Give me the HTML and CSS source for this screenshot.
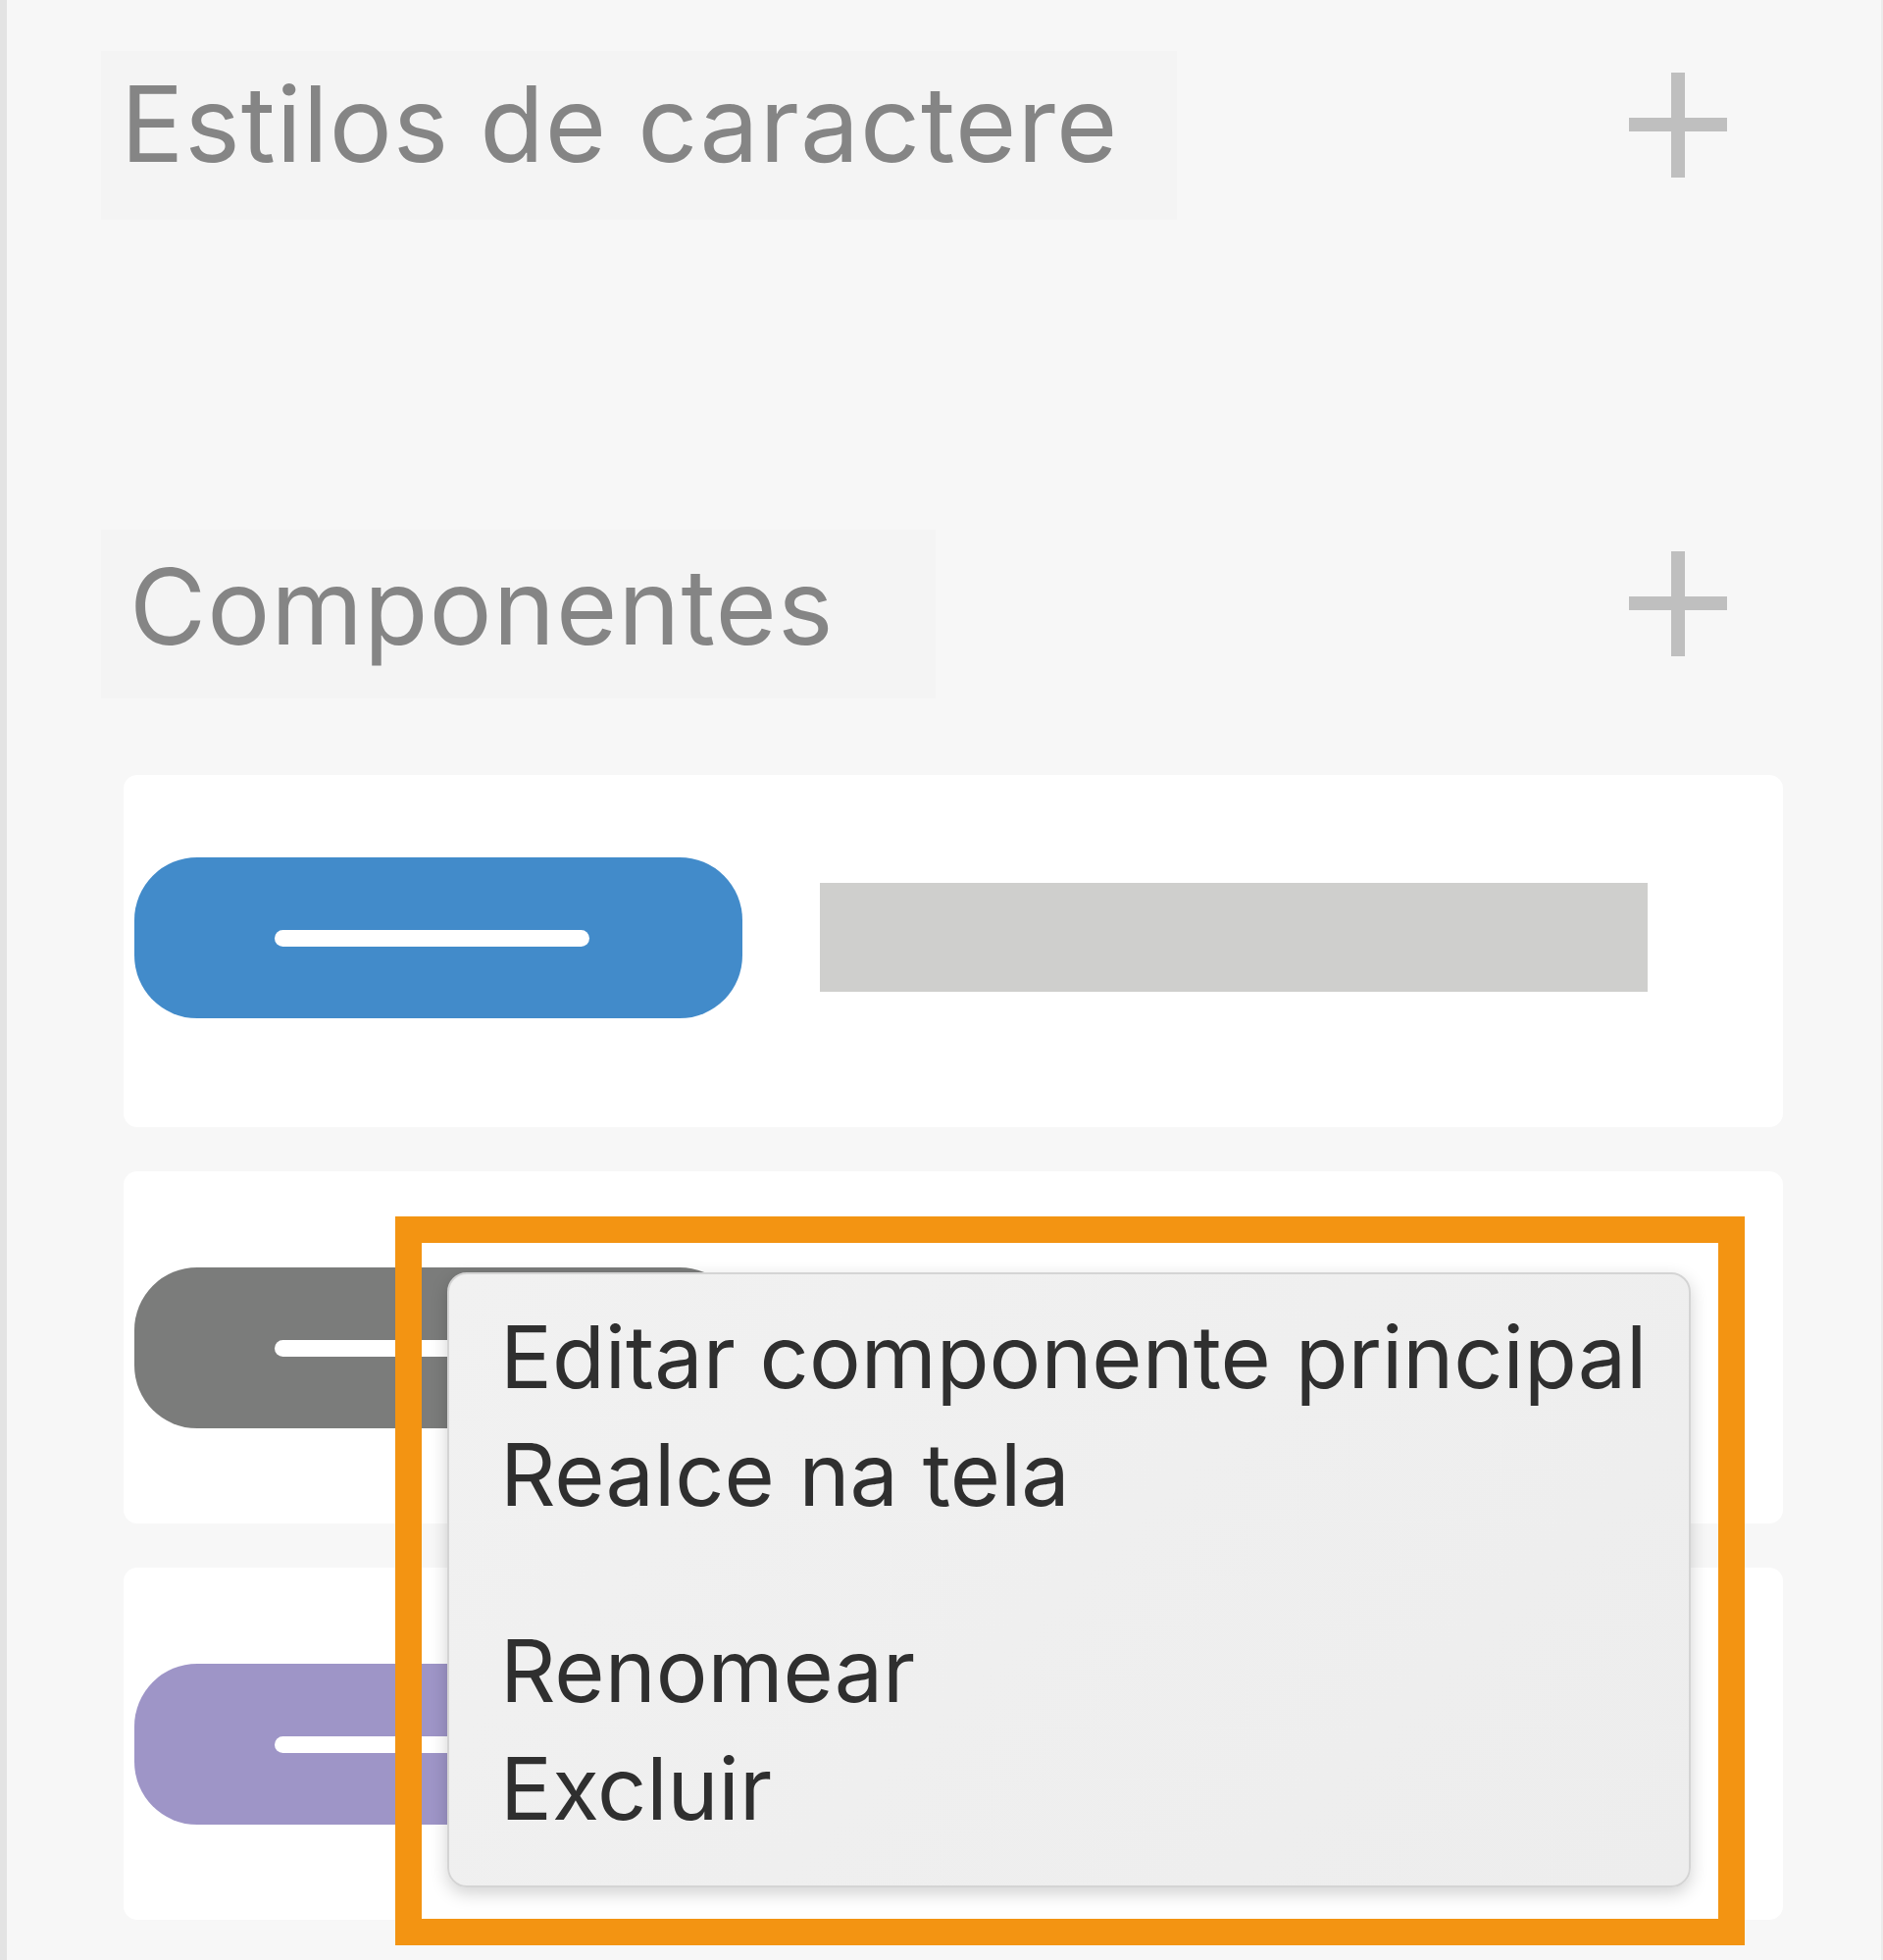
FILE: index.html
```html
<!DOCTYPE html>
<html lang="pt">
<head>
<meta charset="utf-8">
<title>Componentes</title>
<link rel="stylesheet" href="styles.css">
</head>
<body>
<div class="panel">
  <div class="head-row">
    <div class="head-box head-box--styles">Estilos de caractere</div>
    <svg class="plus" width="100" height="107" viewBox="0 0 100 107" aria-hidden="true">
      <rect x="43" y="0" width="14" height="107" fill="#bfbfbf"/>
      <rect x="0" y="46" width="100" height="14" fill="#bfbfbf"/>
    </svg>
  </div>

  <div class="head-row head-row--components">
    <div class="head-box head-box--components">Componentes</div>
    <svg class="plus" width="100" height="107" viewBox="0 0 100 107" aria-hidden="true">
      <rect x="43" y="0" width="14" height="107" fill="#bfbfbf"/>
      <rect x="0" y="46" width="100" height="14" fill="#bfbfbf"/>
    </svg>
  </div>

  <div class="cards">
    <div class="card card--first">
      <div class="pill pill--blue"><span class="pill-line"></span></div>
      <div class="label-bar"></div>
    </div>
    <div class="card">
      <div class="pill pill--gray"><span class="pill-line"></span></div>
      <div class="label-bar"></div>
    </div>
    <div class="card">
      <div class="pill pill--purple"><span class="pill-line"></span></div>
      <div class="label-bar"></div>
    </div>
  </div>

  <div class="highlight">
    <div class="menu">
      <div class="menu-item">Editar componente principal</div>
      <div class="menu-item">Realce na tela</div>
      <div class="menu-sep"></div>
      <div class="menu-item">Renomear</div>
      <div class="menu-item">Excluir</div>
    </div>
  </div>
</div>
</body>
</html>
```

FILE: styles.css
```css
* { box-sizing: border-box; }

html, body {
  margin: 0;
  padding: 0;
  background: #f7f7f7;
}

.panel {
  position: relative;
  width: 1920px;
  min-height: 1998px;
  background: #f7f7f7;
  border-left: 7px solid #e3e3e3;
  border-right: 2px solid #ececec;
  padding-top: 52px;
  font-family: Inter, "Noto Sans", "Liberation Sans", sans-serif;
}

.head-row {
  display: flex;
  justify-content: space-between;
  align-items: flex-start;
  padding-left: 96px;
  padding-right: 157px;
}

.head-row--components {
  margin-top: 316px;
}

.head-box {
  height: 172px;
  background: #f4f4f4;
  color: #858585;
  font-size: 107px;
  letter-spacing: 1px;
  line-height: 126px;
  padding: 11px 0 35px 20px;
  white-space: nowrap;
}

.head-box--styles { width: 1097px; }

.head-box--components {
  width: 851px;
  padding-top: 15px;
  padding-left: 29px;
}

.plus {
  display: block;
  margin-top: 22px;
  flex: none;
}

.cards {
  display: flex;
  flex-direction: column;
  gap: 45px;
  margin: 78px 100px 0 119px;
}

.card {
  height: 359px;
  background: #ffffff;
  border-radius: 14px;
  padding: 98px 0 0 11px;
  display: flex;
  align-items: flex-start;
}

.card--first {
  padding-top: 84px;
}

.pill {
  width: 620px;
  height: 164px;
  border-radius: 64px;
  display: flex;
  align-items: center;
  padding-left: 143px;
  flex: none;
}

.pill--blue { background: #428bca; }
.pill--gray { background: #7b7c7b; }
.pill--purple { background: #9e95c7; }

.pill-line {
  display: block;
  width: 321px;
  height: 17px;
  border-radius: 9px;
  background: #ffffff;
}

.label-bar {
  width: 844px;
  height: 111px;
  margin-left: 79px;
  margin-top: 26px;
  background: #cfcfcd;
  flex: none;
}

.highlight {
  position: absolute;
  left: 396px;
  top: 1240px;
  width: 1376px;
  height: 743px;
  border: 27px solid #f39412;
  padding: 30px 28px 32px 26px;
}

.menu {
  width: 1268px;
  height: 627px;
  background: linear-gradient(135deg, #f1f1f1 0%, #ededed 100%);
  border: 2px solid #d4d4d4;
  border-radius: 20px;
  box-shadow: 0 6px 18px rgba(0, 0, 0, 0.18);
  padding: 24px 0 0 52px;
  color: #2f2f2f;
  font-size: 88px;
  line-height: 120px;
  white-space: nowrap;
}

.menu-sep {
  height: 80px;
}
```
